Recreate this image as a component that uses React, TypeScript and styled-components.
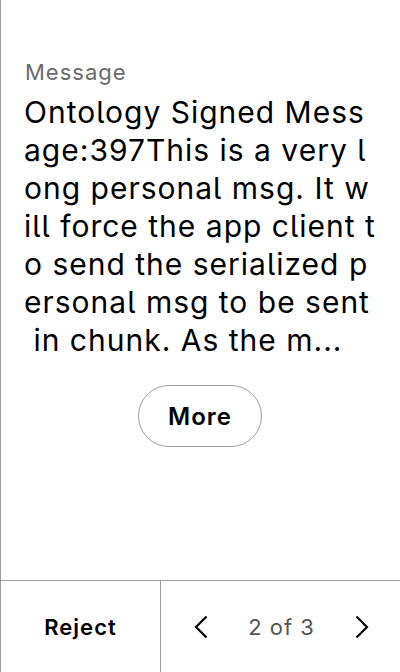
import React from 'react';
import styled, { createGlobalStyle } from 'styled-components';

const GlobalStyle = createGlobalStyle`
  html, body {
    margin: 0;
    padding: 0;
    background: #ffffff;
  }
  body {
    font-family: Inter, "Noto Sans", sans-serif;
    font-feature-settings: "cv05" 1;
    letter-spacing: 1px;
    color: #000000;
  }
  button {
    font-family: inherit;
    font-feature-settings: inherit;
    letter-spacing: inherit;
  }
`;

const Screen = styled.div`
  width: 400px;
  height: 672px;
  box-sizing: border-box;
  border-left: 1px solid #9e9e9e;
  display: flex;
  flex-direction: column;
  background: #ffffff;
`;

const Content = styled.div`
  flex: 1;
  padding: 57px 24px 0 23px;
  display: flex;
  flex-direction: column;
`;

const Label = styled.div`
  padding-left: 1px;
  font-size: 22px;
  line-height: 30px;
  color: #6b6b6b;
`;

// the device wraps the message per character, so the lines come as they are drawn
const Body = styled.div`
  margin-top: 6px;
  font-size: 30px;
  line-height: 38px;
  letter-spacing: 1px;
  color: #000000;
`;

const Line = styled.div`
  white-space: pre;
`;

const MoreButton = styled.button`
  align-self: center;
  margin-top: 26px;
  width: 124px;
  height: 62px;
  border: 1px solid #9e9e9e;
  border-radius: 31px;
  background: #ffffff;
  font-size: 24px;
  font-weight: 600;
  color: #000000;
`;

const Footer = styled.div`
  height: 92px;
  box-sizing: border-box;
  border-top: 1px solid #9e9e9e;
  display: grid;
  grid-template-columns: 160px 1fr;
`;

const RejectButton = styled.button`
  border: none;
  border-right: 1px solid #9e9e9e;
  background: transparent;
  font-size: 22px;
  font-weight: 600;
  color: #000000;
`;

const Pager = styled.div`
  display: flex;
  align-items: center;
  justify-content: space-between;
  padding: 0 26px 0 28px;
`;

const PageText = styled.span`
  font-size: 22px;
  color: #555555;
`;

const ArrowButton = styled.button`
  border: none;
  background: transparent;
  padding: 0;
  width: 24px;
  height: 28px;
  display: flex;
  align-items: center;
  justify-content: center;
`;

const Chevron = ({ dir }: { dir: 'left' | 'right' }) => (
  <svg width="14" height="24" viewBox="0 0 14 24" fill="none">
    <path
      d={dir === 'left' ? 'M12.5 1.5L2 12l10.5 10.5' : 'M1.5 1.5L12 12 1.5 22.5'}
      stroke="#000"
      strokeWidth="2.2"
    />
  </svg>
);

const messageLines = [
  'Ontology Signed Mess',
  'age:397This is a very l',
  'ong personal msg. It w',
  'ill force the app client t',
  'o send the serialized p',
  'ersonal msg to be sent',
  ' in chunk. As the m...',
];

export default function App() {
  return (
    <>
      <GlobalStyle />
      <Screen>
        <Content>
          <Label>Message</Label>
          <Body>
            {messageLines.map((line, i) => (
              <Line key={i}>{line}</Line>
            ))}
          </Body>
          <MoreButton>More</MoreButton>
        </Content>
        <Footer>
          <RejectButton>Reject</RejectButton>
          <Pager>
            <ArrowButton>
              <Chevron dir="left" />
            </ArrowButton>
            <PageText>2 of 3</PageText>
            <ArrowButton>
              <Chevron dir="right" />
            </ArrowButton>
          </Pager>
        </Footer>
      </Screen>
    </>
  );
}
